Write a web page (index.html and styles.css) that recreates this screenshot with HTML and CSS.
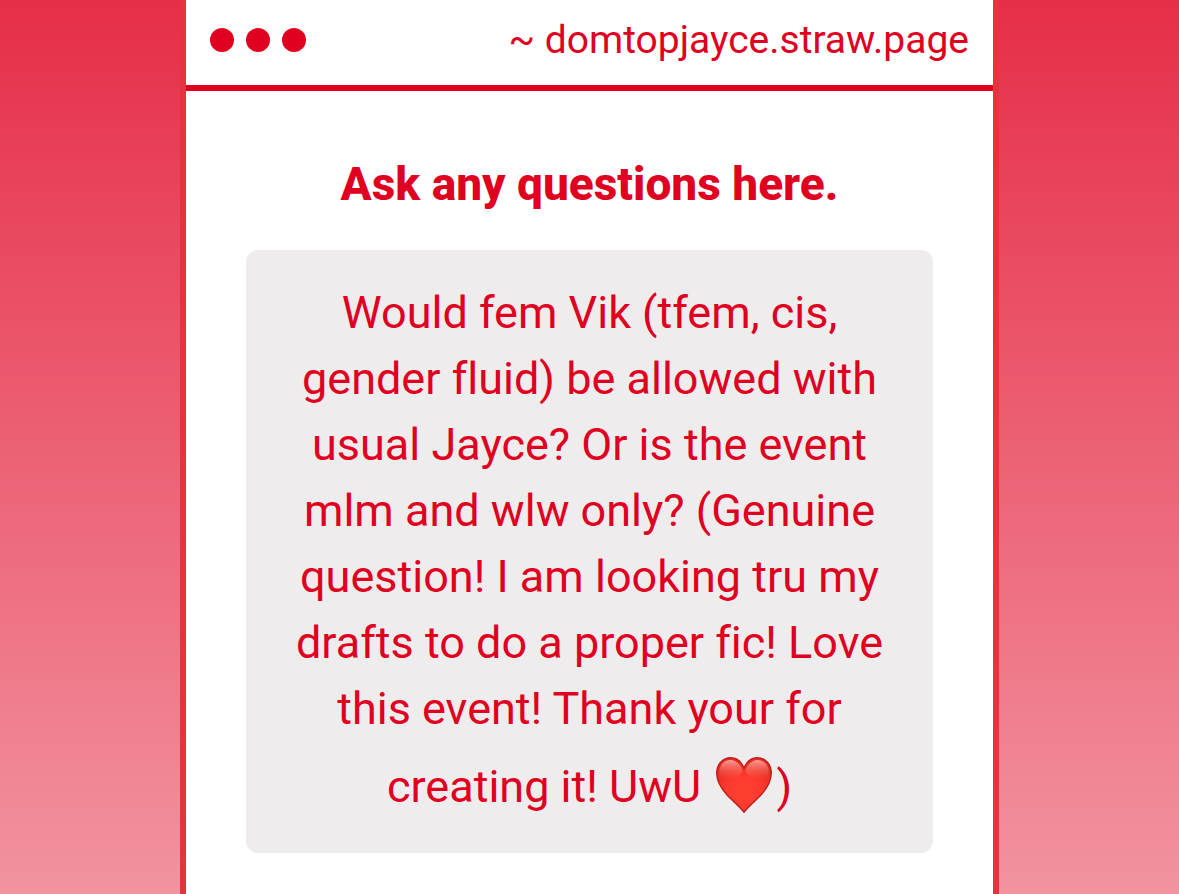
FILE: index.html
```
<!DOCTYPE html>
<html lang="en">
<head>
<meta charset="utf-8">
<title>domtopjayce.straw.page</title>
<link rel="stylesheet" href="styles.css">
</head>
<body>
<main class="window">
  <header class="bar">
    <div class="dots"><span class="dot"></span><span class="dot"></span><span class="dot"></span></div>
    <span class="site">~ domtopjayce.straw.page</span>
  </header>
  <section class="content">
    <h1 class="title">Ask any questions here.</h1>
    <p class="message">Would fem Vik (tfem, cis, gender fluid) be allowed with usual Jayce? Or is the event mlm and wlw only? (Genuine question! I am looking tru my drafts to do a proper fic! Love this event! Thank your for creating it! UwU <svg class="heart" viewBox="0 0 56 56" role="img" aria-label="red heart">
      <defs>
        <radialGradient id="fill" cx="0.5" cy="0.62" r="0.62"><stop offset="0" stop-color="#ff4030"/><stop offset="0.55" stop-color="#fb3a2e"/><stop offset="1" stop-color="#e02a22"/></radialGradient>
        <linearGradient id="shine" x1="0" y1="0" x2="0" y2="1"><stop offset="0" stop-color="#ffb8ae" stop-opacity="0.8"/><stop offset="1" stop-color="#ff6a5a" stop-opacity="0"/></linearGradient>
      </defs>
      <path d="M28 11.5C25.500 4.500 20.500 .7 14.800 .7C6.500 .7 .7 7.500 .7 16C.7 24.500 5.500 32 11.500 38.500C17 44.300 23.500 49 28 55.300C32.500 49 39 44.300 44.500 38.500C50.500 32 55.300 24.500 55.300 16C55.300 7.500 49.500 .7 41.200 .7C35.500 .7 30.500 4.500 28 11.500Z" fill="url(#fill)" stroke="#c01f1b" stroke-width="1.400"/>
      <path d="M26.500 13C24 6.500 19 3 14.500 3C8 3 3.500 8 3 15C4 25 24 25 26.500 13Z" fill="url(#shine)"/>
      <path d="M29.500 13C32 6.500 37 3 41.500 3C48 3 52.500 8 53 15C52 25 32 25 29.500 13Z" fill="url(#shine)"/>
    </svg>)</p>
  </section>
</main>
</body>
</html>
```
FILE: styles.css
```
* { box-sizing: border-box; }
body {
  margin: 0;
  min-height: 100vh;
  display: flex;
  justify-content: center;
  background: linear-gradient(#e62e48, #f293a0);
  color: #e0001f;
  font-family: Roboto, "Liberation Sans", sans-serif;
  font-variant-ligatures: none;
}
.window {
  width: 100%;
  max-width: 819px;
  background: #fff;
  border: solid #e63340;
  border-width: 0 6px;
}
.bar {
  display: flex;
  justify-content: space-between;
  align-items: center;
  padding: 12px 24px 18px;
  min-height: 91px;
  border-bottom: 6px solid #e0001f;
}
.dots { display: flex; gap: 12px; }
.dot { width: 24px; height: 24px; border-radius: 50%; background: #e0001f; }
.site { font-size: 39px; }
.content { padding: 66px 60px 40px; text-align: center; }
.title { margin: 0 0 39px; font-size: 46px; line-height: 54px; font-weight: 800; }
.message {
  margin: 0;
  padding: 30px 48px;
  border-radius: 12px;
  background: #eeeced;
  font-size: 45px;
  line-height: 66px;
}
.heart {
  width: 56px;
  height: 56px;
  margin: 15px 4px 10px;
  vertical-align: -21px;
}
```
